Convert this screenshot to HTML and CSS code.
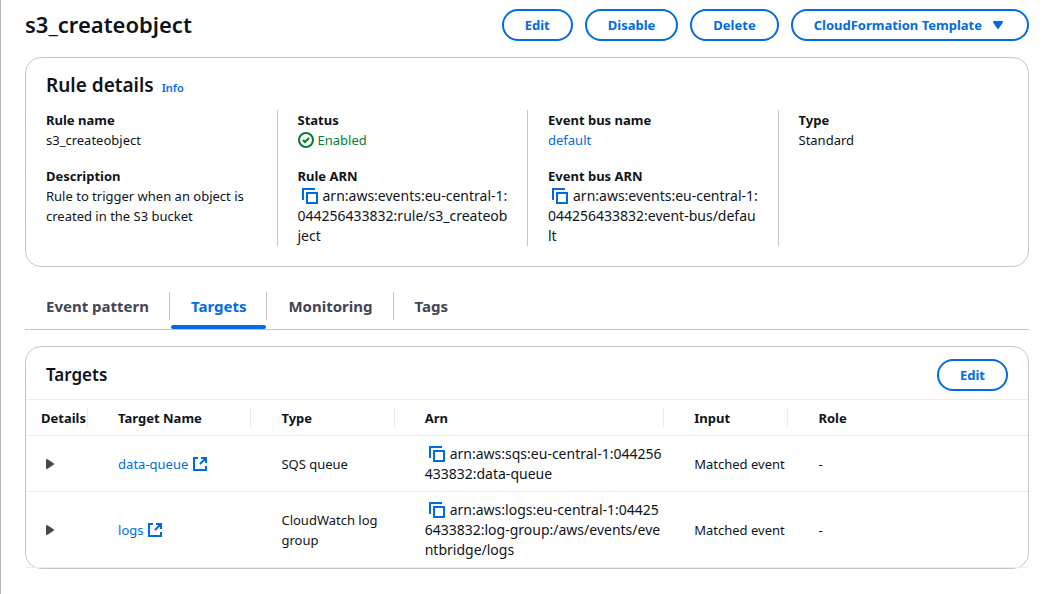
FILE: index.html
```html
<!DOCTYPE html>
<html lang="en">
<head>
<meta charset="utf-8">
<meta name="viewport" content="width=device-width, initial-scale=1">
<title>s3_createobject</title>
<link rel="stylesheet" href="styles.css">
</head>
<body>
<svg class="sprite" aria-hidden="true">
  <symbol id="copy" viewBox="0 0 16 16"><path d="M1 12V1h12M5 5h10v10H5z" fill="none" stroke="currentColor" stroke-width="2"/></symbol>
  <symbol id="external" viewBox="0 0 16 16"><path d="M6 2H2v12h12v-4M9 2h5v5M14 2L8 8" fill="none" stroke="currentColor" stroke-width="2"/></symbol>
  <symbol id="right" viewBox="0 0 16 16"><path d="M6 4v8l6-4z" fill="currentColor" stroke="currentColor" stroke-width="2" stroke-linejoin="round"/></symbol>
</svg>
<main class="page">
  <header class="page-header">
    <h1 class="page-title">s3_createobject</h1>
    <div class="actions">
      <button class="btn" type="button">Edit</button>
      <button class="btn" type="button">Disable</button>
      <button class="btn" type="button">Delete</button>
      <button class="btn" type="button">CloudFormation Template
        <svg class="caret" viewBox="0 0 16 16" aria-hidden="true"><path d="M4 5h8l-4 6z" fill="currentColor" stroke="currentColor" stroke-width="2" stroke-linejoin="round"/></svg>
      </button>
    </div>
  </header>

  <section class="card">
    <div class="details-header">
      <h2 class="details-title">Rule details</h2>
      <a class="info" href="#">Info</a>
    </div>
    <div class="columns">
      <dl class="column">
        <div><dt>Rule name</dt><dd>s3_createobject</dd></div>
        <div><dt>Description</dt><dd>Rule to trigger when an object is created in the S3 bucket</dd></div>
      </dl>
      <dl class="column">
        <div><dt>Status</dt><dd class="status"><svg class="icon" viewBox="0 0 16 16" aria-hidden="true"><g fill="none" stroke="currentColor" stroke-width="2"><circle cx="8" cy="8" r="7"/><path d="M5 8l2 2 4-4"/></g></svg>Enabled</dd></div>
        <div><dt>Rule ARN</dt><dd class="arn"><button class="copy" type="button" aria-label="Copy rule ARN"><svg class="icon"><use href="#copy"/></svg></button>arn:aws:events:eu-central-1:<br>044256433832:rule/s3_createob<br>ject</dd></div>
      </dl>
      <dl class="column">
        <div><dt>Event bus name</dt><dd><a href="#">default</a></dd></div>
        <div><dt>Event bus ARN</dt><dd class="arn"><button class="copy" type="button" aria-label="Copy event bus ARN"><svg class="icon"><use href="#copy"/></svg></button>arn:aws:events:eu-central-1:<br>044256433832:event-bus/defau<br>lt</dd></div>
      </dl>
      <dl class="column">
        <div><dt>Type</dt><dd>Standard</dd></div>
      </dl>
    </div>
  </section>

  <div class="tabs" role="tablist">
    <button class="tab" type="button" role="tab">Event pattern</button>
    <button class="tab active" type="button" role="tab" aria-selected="true">Targets</button>
    <button class="tab" type="button" role="tab">Monitoring</button>
    <button class="tab" type="button" role="tab">Tags</button>
  </div>

  <section class="card">
    <div class="table-header">
      <h2 class="table-title">Targets</h2>
      <button class="btn" type="button">Edit</button>
    </div>
    <table class="targets">
      <colgroup><col class="c-details"><col class="c-name"><col class="c-type"><col class="c-arn"><col class="c-input"><col></colgroup>
      <thead>
        <tr><th><span>Details</span></th><th><span>Target Name</span></th><th><span>Type</span></th><th><span>Arn</span></th><th><span>Input</span></th><th><span>Role</span></th></tr>
      </thead>
      <tbody>
        <tr>
          <td><button class="expand" type="button" aria-label="Show data-queue details"><svg class="icon"><use href="#right"/></svg></button></td>
          <td><a href="#">data-queue <svg class="icon"><use href="#external"/></svg></a></td>
          <td>SQS queue</td>
          <td class="arn"><button class="copy" type="button" aria-label="Copy ARN"><svg class="icon"><use href="#copy"/></svg></button>arn:aws:sqs:eu-central-1:044256<br>433832:data-queue</td>
          <td>Matched event</td>
          <td>-</td>
        </tr>
        <tr>
          <td><button class="expand" type="button" aria-label="Show logs details"><svg class="icon"><use href="#right"/></svg></button></td>
          <td><a href="#">logs <svg class="icon"><use href="#external"/></svg></a></td>
          <td>CloudWatch log group</td>
          <td class="arn"><button class="copy" type="button" aria-label="Copy ARN"><svg class="icon"><use href="#copy"/></svg></button>arn:aws:logs:eu-central-1:04425<br>6433832:log-group:/aws/events/eve<br>ntbridge/logs</td>
          <td>Matched event</td>
          <td>-</td>
        </tr>
      </tbody>
    </table>
  </section>
</main>
</body>
</html>
```

FILE: styles.css
```css
* { box-sizing: border-box; }
body {
  margin: 0;
  background: #fff;
  color: #0f141a;
  font: 13px/20px "Noto Sans", "Open Sans", sans-serif;
}
h1, h2, dl, dd { margin: 0; }
a { color: #006ce0; text-decoration: none; }
button { font: inherit; color: inherit; background: none; border: 0; padding: 0; cursor: pointer; }
.sprite { position: absolute; width: 0; height: 0; }
.icon { width: 16px; height: 16px; vertical-align: -3px; }

.page {
  min-height: 100vh;
  border-left: 1px solid #b4b4bb;
  padding: 9px 21px 25px 24px;
}
.page-header { display: flex; justify-content: space-between; align-items: flex-start; margin-bottom: 16px; }
.page-title { font-size: 22px; line-height: 30px; font-weight: 600; }
.actions { display: flex; gap: 12px; }
.btn {
  display: inline-flex;
  align-items: center;
  height: 32px;
  padding: 0 21px;
  border: 2px solid #006ce0;
  border-radius: 16px;
  color: #006ce0;
  font-weight: 700;
  white-space: nowrap;
}
.caret { width: 16px; height: 16px; margin-left: 8px; }

.card { border: 1px solid #c6c6cd; border-radius: 16px; }
.details-header { display: flex; align-items: baseline; gap: 8px; padding: 15px 20px 12px; }
.details-title { font-size: 19px; line-height: 24px; font-weight: 600; }
.info { font-size: 11px; font-weight: 600; }
.columns { display: grid; grid-template-columns: repeat(4, 1fr); padding-bottom: 20px; }
.column { display: flex; flex-direction: column; gap: 16px; padding: 0 16px 0 20px; }
.column + .column { border-left: 1px solid #c6c6cd; }
dt { font-weight: 700; }
.arn { font-size: 14px; word-break: break-all; }
.status { color: #00802f; }
.status .icon { margin-right: 4px; }
.copy { margin: 0 5px 0 4px; color: #006ce0; }

.tabs { display: flex; height: 43px; margin: 20px 0 16px; border-bottom: 1px solid #c6c6cd; }
.tab {
  display: flex;
  align-items: flex-start;
  position: relative;
  padding: 9px 21px 0;
  color: #424650;
  font-size: 15px;
  font-weight: 700;
}
.tab + .tab::before { content: ""; position: absolute; left: -1px; top: 5px; height: 28px; border-left: 1px solid #c6c6cd; }
.active { color: #006ce0; }
.active::after { content: ""; position: absolute; left: 1px; right: 1px; bottom: 0; height: 4px; border-radius: 2px; background: #006ce0; }

.table-header { display: flex; align-items: center; justify-content: space-between; padding: 12px 20px 8px; }
.table-title { font-size: 17px; line-height: 24px; font-weight: 600; }
.targets { width: 100%; table-layout: fixed; border-collapse: separate; border-spacing: 0; border-top: 1px solid #ebebf0; }
.c-details { width: 6.2%; }
.c-name { width: 16.3%; }
.c-type { width: 14.3%; }
.c-arn { width: 26.9%; }
.c-input { width: 12.4%; }
.targets th, .targets td { padding: 8px 0 7px 30px; border-bottom: 1px solid #ebebf0; text-align: left; vertical-align: middle; }
.targets th:first-child, .targets td:first-child { padding-left: 15px; }
.targets th { font-weight: 700; white-space: nowrap; }
.targets th span { display: block; border-right: 1px solid #ebebf0; }
.targets th:last-child span { border-right: 0; }
.expand { color: #424650; }
```
